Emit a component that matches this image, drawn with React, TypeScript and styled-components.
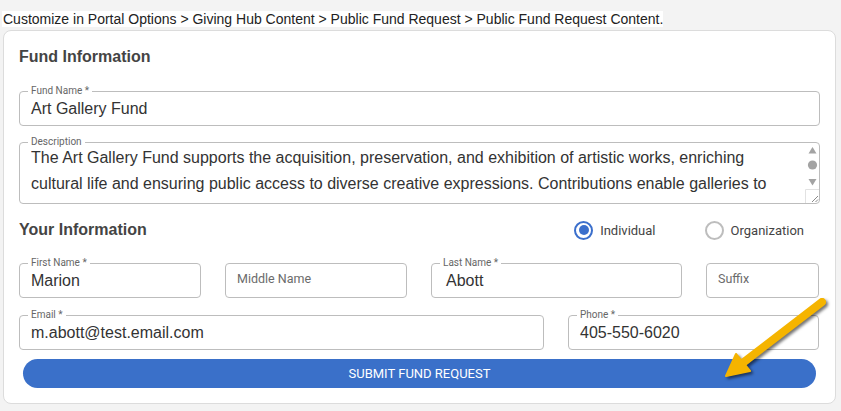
import styled, { createGlobalStyle } from "styled-components";

const GlobalStyle = createGlobalStyle`
  html, body {
    margin: 0;
    padding: 0;
    background: #f3f3f3;
  }
  body {
    width: 841px;
    height: 411px;
    overflow: hidden;
  }
`

const PageBase = styled.div`
  position: relative;
  width: 841px;
  height: 411px;
  padding-top: 12px;
  box-sizing: border-box;
  font-family: "Liberation Sans", Arial, sans-serif;
`

const CrumbBase = styled.div`
  margin-left: 2px;
  font-size: 14px;
  line-height: 15px;
  color: #222;
  span {
    background: #fff;
    padding-left: 1px;
  }
`

const CardBase = styled.section`
  margin: 3px 0 0 3px;
  width: 833px;
  box-sizing: border-box;
  background: #fff;
  border: 1px solid #dcdcdc;
  border-radius: 8px;
  padding: 16px 15px 15px;
  display: flex;
  flex-direction: column;
`

const TitleBase = styled.h2`
  margin: 0;
  font-size: 16px;
  line-height: 20px;
  font-weight: 700;
  color: #444;
`

const HeaderRowBase = styled.div<{ $top: number }>`
  margin-top: ${p => p.$top}px;
  height: 24px;
  display: flex;
  align-items: center;
  justify-content: space-between;
  h2 { line-height: 24px; }
`

const RadioGroupBase = styled.div`
  display: flex;
  align-items: center;
  gap: 49px;
  margin-right: 16px;
`

const RadioBase = styled.label`
  display: flex;
  align-items: center;
  gap: 7px;
  font-family: Roboto, "Liberation Sans", sans-serif;
  font-size: 13px;
  color: #444;
`

const RadioCircle = styled.span<{ $on: boolean }>`
  width: 19px;
  height: 19px;
  box-sizing: border-box;
  border-radius: 50%;
  border: 2px solid ${p => p.$on ? "#3b6fcc" : "#bdbdbd"};
  display: flex;
  align-items: center;
  justify-content: center;
  &::after {
    content: "";
    width: 10px;
    height: 10px;
    border-radius: 50%;
    background: ${p => p.$on ? "#3b6fcc" : "transparent"};
  }
`

const FieldBase = styled.div<{ $top: number; $h?: number; $inset?: number }>`
  position: relative;
  margin-top: ${p => p.$top}px;
  height: ${p => p.$h ?? 35}px;
  box-sizing: border-box;
  border: 1px solid #bdbdbd;
  border-radius: 4px;
  display: flex;
  align-items: center;
  padding-left: ${p => p.$inset ?? 11}px;
  background: #fff;
`

const LegendBase = styled.span`
  position: absolute;
  top: -7px;
  left: 8px;
  padding: 0 3px;
  background: #fff;
  font-family: Roboto, "Liberation Sans", sans-serif;
  font-size: 10px;
  line-height: 12px;
  color: #666;
`

const ValueBase = styled.span`
  font-size: 16px;
  color: #333;
  white-space: nowrap;
`

const PlaceholderBase = styled.span`
  font-family: Roboto, "Liberation Sans", sans-serif;
  font-size: 12.5px;
  color: #6b6b6b;
  padding-bottom: 5px;
`

const AreaBase = styled(FieldBase)`
  align-items: stretch;
  padding-right: 0;
`

const AreaTextBase = styled.div`
  position: relative;
  z-index: 1;
  flex: 1;
  overflow: hidden;
  font-size: 16px;
  line-height: 26px;
  color: #333;
  div:first-child { margin-top: 2px; }
  div { white-space: nowrap; }
`

const ScrollBase = styled.div`
  width: 14px;
  display: flex;
`

const GridRowBase = styled.div<{ $top: number; $cols: string }>`
  margin-top: ${p => p.$top}px;
  display: grid;
  grid-template-columns: ${p => p.$cols};
  column-gap: 24px;
  & > div { margin-top: 0; }
`

const ButtonBase = styled.button`
  margin: 9px 4px 0;
  height: 29px;
  border: none;
  border-radius: 15px;
  background: #3a70c9;
  color: #fff;
  font-family: Roboto, "Liberation Sans", sans-serif;
  font-size: 13px;
  text-transform: uppercase;
  cursor: pointer;
`

const ArrowBase = styled.svg`
  position: absolute;
  left: 715px;
  top: 290px;
  width: 126px;
  height: 100px;
  overflow: visible;
  filter: drop-shadow(2px 2px 1.5px rgba(0, 0, 0, 0.55));
`

const Field = ({ label, value, placeholder, top = 0, inset }: { label?: string; value?: string; placeholder?: string; top?: number; inset?: number }) => (
  <FieldBase $top={top} $inset={inset}>
    {label && <LegendBase>{label}</LegendBase>}
    {value && <ValueBase>{value}</ValueBase>}
    {placeholder && <PlaceholderBase>{placeholder}</PlaceholderBase>}
  </FieldBase>
)

const Scrollbar = () => (
  <ScrollBase>
    <svg width="14" height="60" viewBox="0 0 14 60">
      <polygon points="7.5,4 11.5,10.5 3.5,10.5" fill="#a3a3a3" />
      <circle cx="7.5" cy="22" r="4.6" fill="#a3a3a3" />
      <polygon points="3.5,36 11.5,36 7.5,42.5" fill="#a3a3a3" />
      <path d="M0.5 60 V46.5 H14" fill="none" stroke="#e2e2e2" />
      <path d="M13 53 L7 59 M13 56.5 L10.5 59" stroke="#8a8a8a" strokeWidth="1" />
    </svg>
  </ScrollBase>
)

const Radio = ({ on, children }: { on: boolean; children: string }) => (
  <RadioBase>
    <RadioCircle $on={on} />
    {children}
  </RadioBase>
)

const App = () => {
  return <PageBase>
    <GlobalStyle />
    <CrumbBase>
      <span>Customize in Portal Options &gt; Giving Hub Content &gt; Public Fund Request &gt; Public Fund Request Content.</span>
    </CrumbBase>
    <CardBase>
      <TitleBase>Fund Information</TitleBase>
      <Field top={24} label="Fund Name *" value="Art Gallery Fund" />
      <AreaBase $top={16} $h={62}>
        <LegendBase>Description</LegendBase>
        <AreaTextBase>
          <div>The Art Gallery Fund supports the acquisition, preservation, and exhibition of artistic works, enriching</div>
          <div>cultural life and ensuring public access to diverse creative expressions. Contributions enable galleries to</div>
        </AreaTextBase>
        <Scrollbar />
      </AreaBase>
      <HeaderRowBase $top={14}>
        <TitleBase>Your Information</TitleBase>
        <RadioGroupBase>
          <Radio on>Individual</Radio>
          <Radio on={false}>Organization</Radio>
        </RadioGroupBase>
      </HeaderRowBase>
      <GridRowBase $top={21} $cols="182px 182px 251px 113px">
        <Field label="First Name *" value="Marion" />
        <Field placeholder="Middle Name" />
        <Field label="Last Name *" value="Abott" inset={14} />
        <Field placeholder="Suffix" />
      </GridRowBase>
      <GridRowBase $top={17} $cols="525px 251px">
        <Field label="Email *" value="m.abott@test.email.com" />
        <Field label="Phone *" value="405-550-6020" />
      </GridRowBase>
      <ButtonBase>Submit Fund Request</ButtonBase>
    </CardBase>
    <ArrowBase viewBox="0 0 126 100">
      <line x1="107" y1="12" x2="29" y2="72" stroke="#f5b400" strokeWidth="8" strokeLinecap="round" />
      <polygon points="11,86 21,64 35,81" fill="#f5b400" stroke="#f5b400" strokeWidth="2" strokeLinejoin="round" />
    </ArrowBase>
  </PageBase>
}

export default App;
